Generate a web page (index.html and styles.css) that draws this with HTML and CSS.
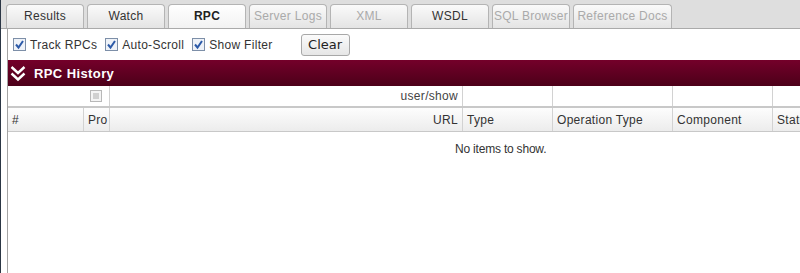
FILE: index.html
```html
<!DOCTYPE html>
<html lang="en">
<head>
    <meta charset="UTF-8">
    <title>RPC Monitor</title>
    <link rel="stylesheet" href="styles.css">
</head>
<body>
    <div class="tabbar">
        <div class="tab">Results</div>
        <div class="tab">Watch</div>
        <div class="tab active">RPC</div>
        <div class="tab disabled">Server Logs</div>
        <div class="tab disabled">XML</div>
        <div class="tab">WSDL</div>
        <div class="tab disabled">SQL Browser</div>
        <div class="tab disabled wide">Reference Docs</div>
    </div>

    <div class="panel">
        <div class="toolbar">
            <label class="check">
                <svg class="box" width="13" height="13" viewBox="0 0 13 13"><rect x="0.5" y="0.5" width="12" height="12" fill="#eef2f8" stroke="#7d8fa8"/><path d="M3 6.5 L5.5 9.5 L10 3" fill="none" stroke="#2c5aa8" stroke-width="2"/></svg>
                Track RPCs
            </label>
            <label class="check">
                <svg class="box" width="13" height="13" viewBox="0 0 13 13"><rect x="0.5" y="0.5" width="12" height="12" fill="#eef2f8" stroke="#7d8fa8"/><path d="M3 6.5 L5.5 9.5 L10 3" fill="none" stroke="#2c5aa8" stroke-width="2"/></svg>
                Auto-Scroll
            </label>
            <label class="check">
                <svg class="box" width="13" height="13" viewBox="0 0 13 13"><rect x="0.5" y="0.5" width="12" height="12" fill="#eef2f8" stroke="#7d8fa8"/><path d="M3 6.5 L5.5 9.5 L10 3" fill="none" stroke="#2c5aa8" stroke-width="2"/></svg>
                Show Filter
            </label>
            <button class="btn">Clear</button>
        </div>

        <div class="section-head">
            <svg width="16" height="17" viewBox="0 0 16 17"><path d="M1.5 2 L8 8 L14.5 2 M1.5 8.5 L8 14.5 L14.5 8.5" fill="none" stroke="#fff" stroke-width="2.4"/></svg>
            <span>RPC History</span>
        </div>

        <div class="grid">
            <div class="filter-row">
                <div class="cell c-first"><span class="mini-box"></span></div>
                <div class="cell c-url right">user/show</div>
                <div class="cell c-type"></div>
                <div class="cell c-op"></div>
                <div class="cell c-comp"></div>
                <div class="cell c-status"></div>
            </div>
            <div class="head-row">
                <div class="cell c-num">#</div>
                <div class="cell c-pro">Pro</div>
                <div class="cell c-url right">URL</div>
                <div class="cell c-type">Type</div>
                <div class="cell c-op">Operation Type</div>
                <div class="cell c-comp">Component</div>
                <div class="cell c-status">Status</div>
            </div>
            <div class="empty">No items to show.</div>
        </div>
    </div>
</body>
</html>
```

FILE: styles.css
```css
body {
    margin: 0;
    height: 273px;
    overflow: hidden;
    font-family: 'Liberation Sans', Arial, sans-serif;
    font-size: 12px;
    color: #222;
    background: #fff;
    border-left: 1px solid #2b3645;
}
.tabbar {
    height: 28px;
    background: #dedede;
    border-bottom: 1px solid #aaa;
    display: flex;
    align-items: flex-end;
    gap: 3px;
    padding-left: 5px;
}
.tab {
    width: 76px;
    height: 23px;
    line-height: 23px;
    text-align: center;
    letter-spacing: 0.3px;
    border: 1px solid #b4b4b4;
    border-bottom: none;
    border-radius: 4px 4px 0 0;
    background: linear-gradient(#fafafa, #e4e4e4);
    color: #333;
}
.tab.active {
    background: linear-gradient(#fff, #f2f2f2);
    font-weight: bold;
    color: #222;
}
.tab.disabled {
    color: #aaa;
}
.tab.wide {
    width: 97px;
}
.panel {
    margin-left: 6px;
    border-left: 1px solid #a4a4a4;
    height: 244px;
}
.toolbar {
    height: 31px;
    display: flex;
    align-items: center;
    padding-left: 5px;
}
.check {
    display: flex;
    align-items: center;
    gap: 4px;
    margin-right: 8px;
    letter-spacing: 0.3px;
    color: #333;
}
.btn {
    margin-left: 20px;
    height: 22px;
    width: 49px;
    padding: 0;
    font-family: 'DejaVu Sans', sans-serif;
    font-size: 13px;
    color: #222;
    border: 1px solid #a8a8a8;
    border-radius: 3px;
    background: linear-gradient(#fbfbfb, #e6e6e6);
}
.section-head {
    height: 26px;
    display: flex;
    align-items: center;
    gap: 8px;
    padding-left: 2px;
    background: linear-gradient(#74002a, #4c0019);
    color: #fff;
    font-weight: bold;
    font-size: 13px;
    letter-spacing: 0.4px;
}
.grid {
    width: 1000px;
}
.filter-row, .head-row {
    display: flex;
    height: 20px;
}
.filter-row {
    border-bottom: 2px solid #c8c8c8;
    background: #fff;
}
.head-row {
    height: 23px;
    line-height: 24px;
    background: linear-gradient(#fdfdfd, #ececec);
    border-bottom: 1px solid #c8c8c8;
    letter-spacing: 0.3px;
    color: #333;
}
.filter-row .cell {
    line-height: 20px;
    color: #444;
    letter-spacing: 0.3px;
}
.cell {
    box-sizing: border-box;
    border-right: 1px solid #d2d2d2;
    padding: 0 4px;
    overflow: hidden;
    white-space: nowrap;
}
.c-first { width: 102px; display: flex; align-items: center; justify-content: flex-end; padding-right: 7px; }
.c-num { width: 76px; }
.c-pro { width: 26px; }
.c-url { width: 353px; }
.c-type { width: 90px; }
.c-op { width: 120px; }
.c-comp { width: 100px; }
.c-status { width: 120px; }
.right { text-align: right; }
.mini-box {
    width: 12px;
    height: 12px;
    box-sizing: border-box;
    border: 1px solid #b8b8b8;
    background: #f4f4f4;
    box-shadow: inset 0 0 0 2px #f4f4f4, inset 0 0 0 6px #d0d0d0;
}
.empty {
    padding: 10px 0 0 447px;
    font-size: 12px;
    color: #333;
    letter-spacing: -0.2px;
}
```
